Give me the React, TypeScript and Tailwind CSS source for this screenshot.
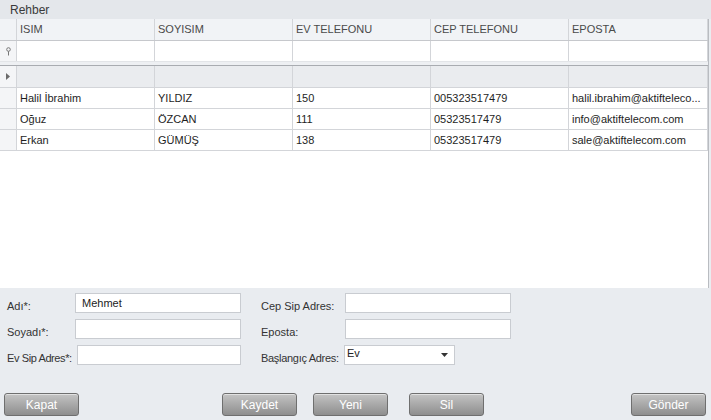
import React from "react"

const cols = [
  { key: "isim", title: "ISIM", w: "w-[138px]" },
  { key: "soyisim", title: "SOYISIM", w: "w-[138px]" },
  { key: "ev", title: "EV TELEFONU", w: "w-[138px]" },
  { key: "cep", title: "CEP TELEFONU", w: "w-[138px]" },
  { key: "eposta", title: "EPOSTA", w: "w-[139px]" },
]

const rows = [
  ["Halil İbrahim", "YILDIZ", "150", "005323517479", "halil.ibrahim@aktifteleco..."],
  ["Oğuz", "ÖZCAN", "111", "05323517479", "info@aktiftelecom.com"],
  ["Erkan", "GÜMÜŞ", "138", "05323517479", "sale@aktiftelecom.com"],
]

function Btn({ label, className = "" }: { label: string; className?: string }) {
  return (
    <button
      className={
        "h-[23px] w-[75px] rounded-[3px] border border-[#6f6f6f] bg-gradient-to-b from-[#c4c4c4] to-[#8e8e8e] text-[12px] text-white shadow-[inset_0_1px_0_rgba(255,255,255,0.5)] " +
        className
      }
    >
      {label}
    </button>
  )
}

function Field({ value = "", w = "w-[166px]" }: { value?: string; w?: string }) {
  return (
    <div className={"h-[20px] border border-[#c9ccd1] bg-white px-[6px] text-[11px] leading-[18px] text-[#222] " + w}>
      {value}
    </div>
  )
}

export default function App() {
  return (
    <div
      className="flex h-[420px] w-[711px] flex-col overflow-hidden bg-[#e9ecf0] text-[11px] text-[#222]"
      style={{ fontFamily: '"Liberation Sans", Arial, sans-serif' }}
    >
      {/* Başlık */}
      <div className="h-[19px] shrink-0 bg-[#e4e7eb] pl-[10px] pt-[3px] text-[12px] leading-[14px] text-[#3a3a3a]">
        Rehber
      </div>

      {/* Tablo */}
      <div className="flex h-[269px] w-[709px] shrink-0 flex-col border-r border-[#b9bcc1] bg-white">
        {/* Başlık satırı */}
        <div className="flex h-[22px] border-b border-[#c6c8cc] bg-[#f1f3f6]">
          <div className="w-[17px] shrink-0 border-r border-[#d3d5d9]" />
          {cols.map((c) => (
            <div
              key={c.key}
              className={"shrink-0 border-r border-[#d3d5d9] pl-[3px] leading-[21px] text-[#4a4a4a] " + c.w}
            >
              {c.title}
            </div>
          ))}
        </div>

        {/* Filtre satırı */}
        <div className="flex h-[21px] border-b border-[#e3e5e8]">
          <div className="flex w-[17px] shrink-0 items-center justify-center border-r border-[#d3d5d9] bg-[#f4f5f7]">
            <svg width="7" height="9" viewBox="0 0 7 9">
              <circle cx="3.5" cy="2.5" r="1.8" fill="none" stroke="#777" strokeWidth="1" />
              <path d="M3.5 4.3V8.5" stroke="#777" strokeWidth="1" />
            </svg>
          </div>
          {cols.map((c) => (
            <div key={c.key} className={"shrink-0 border-r border-[#d3d5d9] " + c.w} />
          ))}
        </div>

        <div className="h-[4px] border-b border-[#a9acb1] bg-[#eef0f3]" />

        {/* Yeni satır */}
        <div className="flex h-[22px] border-b border-[#d3d5d9] bg-[#eaecef]">
          <div className="flex w-[17px] shrink-0 items-center justify-center border-r border-[#d3d5d9] bg-[#f4f5f7]">
            <svg width="4" height="7" viewBox="0 0 4 7">
              <path d="M0 0L4 3.5L0 7Z" fill="#6b6b6b" />
            </svg>
          </div>
          {cols.map((c) => (
            <div key={c.key} className={"shrink-0 border-r border-[#d3d5d9] " + c.w} />
          ))}
        </div>

        {/* Kayıtlar */}
        {rows.map((r, i) => (
          <div key={i} className="flex h-[21px] border-b border-[#d3d5d9]">
            <div className="w-[17px] shrink-0 border-r border-[#d3d5d9] bg-[#f4f5f7]" />
            {cols.map((c, j) => (
              <div
                key={c.key}
                className={"shrink-0 truncate border-r border-[#d3d5d9] pl-[3px] leading-[20px] text-[#1e1e1e] " + c.w}
              >
                {r[j]}
              </div>
            ))}
          </div>
        ))}
        <div className="flex-1" />
      </div>

      {/* Form */}
      <div className="flex flex-1 flex-col px-[4px] pt-[5px]">
        <div className="flex">
          <div className="flex w-[257px] flex-col gap-[6px] pl-[3px]">
            <div className="flex h-[20px] items-center">
              <span className="w-[68px] pt-[5px] leading-[14px] text-[#333]">Adı*:</span>
              <Field value="Mehmet" />
            </div>
            <div className="flex h-[20px] items-center">
              <span className="w-[68px] pt-[5px] leading-[14px] text-[#333]">Soyadı*:</span>
              <Field />
            </div>
            <div className="flex h-[20px] items-center">
              <span className="w-[70px] whitespace-nowrap pt-[5px] leading-[14px] tracking-[-0.4px] text-[#333]">
                Ev Sip Adres*:
              </span>
              <Field w="w-[164px]" />
            </div>
          </div>
          <div className="flex flex-col gap-[6px]">
            <div className="flex h-[20px] items-center">
              <span className="w-[84px] pt-[5px] leading-[14px] text-[#333]">Cep Sip Adres:</span>
              <Field />
            </div>
            <div className="flex h-[20px] items-center">
              <span className="w-[84px] pt-[5px] leading-[14px] text-[#333]">Eposta:</span>
              <Field />
            </div>
            <div className="flex h-[20px] items-center">
              <span className="w-[83px] whitespace-nowrap pt-[5px] leading-[14px] tracking-[-0.3px] text-[#333]">
                Başlangıç Adres:
              </span>
              <div className="relative h-[20px] w-[111px] border border-[#c9ccd1] bg-white pl-[2px] text-[11px] leading-[14px] text-[#222]">
                Ev
                <svg className="absolute right-[6px] top-[7px]" width="7" height="4" viewBox="0 0 7 4">
                  <path d="M0 0H7L3.5 4Z" fill="#333" />
                </svg>
              </div>
            </div>
          </div>
        </div>

        <div className="mt-[28px] flex items-center">
          <Btn label="Kapat" />
          <div className="ml-[143px] flex gap-[16px]">
            <Btn label="Kaydet" />
            <Btn label="Yeni" />
            <Btn label="Sil" className="ml-[5px]" />
          </div>
          <div className="flex-1" />
          <Btn label="Gönder" className="mr-[1px]" />
        </div>
      </div>
    </div>
  )
}
